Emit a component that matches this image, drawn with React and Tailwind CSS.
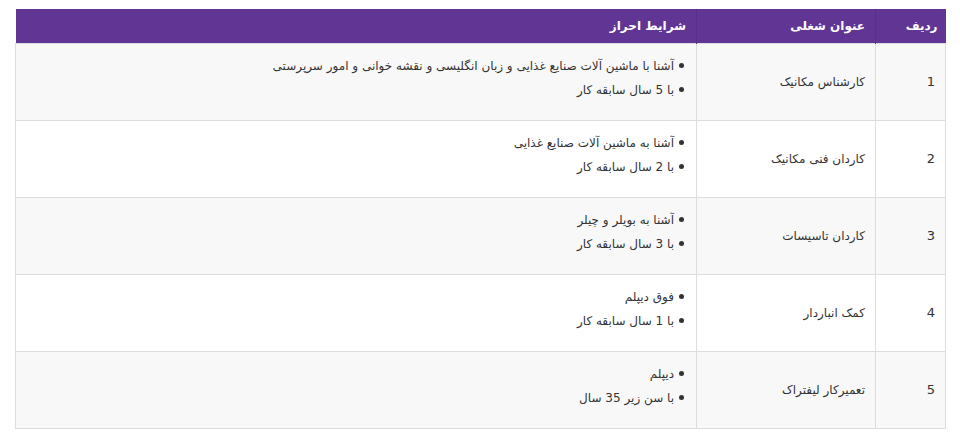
import React from "react";

const rows = [
  { n: "1", title: "کارشناس مکانیک", items: ["آشنا با ماشین آلات صنایع غذایی و زبان انگلیسی و نقشه خوانی و امور سرپرستی", "با 5 سال سابقه کار"] },
  { n: "2", title: "کاردان فنی مکانیک", items: ["آشنا به ماشین آلات صنایع غذایی", "با 2 سال سابقه کار"] },
  { n: "3", title: "کاردان تاسیسات", items: ["آشنا به بویلر و چیلر", "با 3 سال سابقه کار"] },
  { n: "4", title: "کمک انباردار", items: ["فوق دیپلم", "با 1 سال سابقه کار"] },
  { n: "5", title: "تعمیرکار لیفتراک", items: ["دیپلم", "با سن زیر 35 سال"] },
];

export default function App() {
  return (
    <div className="bg-white w-[960px] h-[435px] pt-[9px] pl-[15px]" style={{ fontFamily: "Tahoma, 'DejaVu Sans', sans-serif" }}>
      <table dir="rtl" className="w-[931px] border-collapse text-[12px] text-[#333]">
        <thead>
          <tr className="bg-[#613594] text-white h-[34px] border-b border-[#8b70b4]">
            <th className="w-[70px] text-right font-bold px-[8px] border-l border-[#5a2f88]">ردیف</th>
            <th className="w-[179px] text-right font-bold px-[10px] border-l border-[#5a2f88]">عنوان شغلی</th>
            <th className="text-right font-bold px-[10px]">شرایط احراز</th>
          </tr>
        </thead>
        <tbody>
          {rows.map((r, i) => (
            <tr key={r.n} className={i % 2 === 0 ? "bg-[#f8f8f8]" : "bg-white"}>
              <td className="border border-[#dddddd] px-[10px] align-middle text-[13px]">{r.n}</td>
              <td className="border border-[#dddddd] px-[10px] align-middle">{r.title}</td>
              <td className="border border-[#dddddd] pt-[10px] pb-[18px] pr-[12px] align-top">
                <ul className="flex flex-col">
                  {r.items.map((t) => (
                    <li key={t} className="leading-[24px] flex items-center gap-[5px]">
                      <span className="w-[5px] h-[5px] rounded-full bg-[#333] shrink-0"></span>
                      <span>{t}</span>
                    </li>
                  ))}
                </ul>
              </td>
            </tr>
          ))}
        </tbody>
      </table>
    </div>
  );
}
